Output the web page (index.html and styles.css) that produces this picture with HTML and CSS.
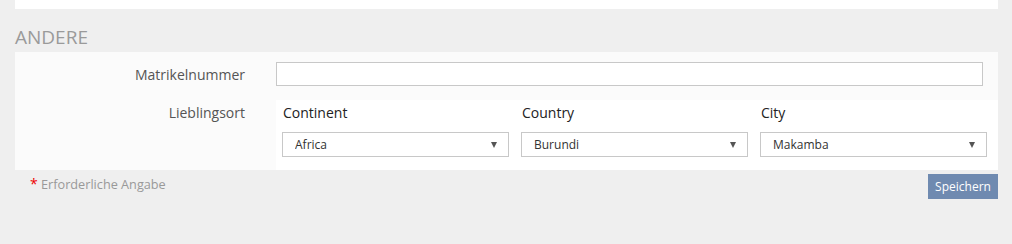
FILE: index.html
```html
<!DOCTYPE html>
<html>
  <head>
    <meta charset="utf-8">
    <title>Andere</title>
    <link rel="stylesheet" href="styles.css">
  </head>
  <body>
    <div class="panel top-panel"></div>

    <h2 class="section-title">ANDERE</h2>

    <form class="panel form-panel" onsubmit="return false">
      <div class="row">
        <label class="row-label" for="matrikel">Matrikelnummer</label>
        <input type="text" id="matrikel" class="text-input" />
      </div>
      <div class="row">
        <div class="row-label">Lieblingsort</div>
        <div class="place">
          <div class="place-field">
            <div class="place-label">Continent</div>
            <div class="select-wrap">
              <select>
                <option>Africa</option>
              </select>
            </div>
          </div>
          <div class="place-field">
            <div class="place-label">Country</div>
            <div class="select-wrap">
              <select>
                <option>Burundi</option>
              </select>
            </div>
          </div>
          <div class="place-field">
            <div class="place-label">City</div>
            <div class="select-wrap">
              <select>
                <option>Makamba</option>
              </select>
            </div>
          </div>
        </div>
      </div>
    </form>

    <div class="footer">
      <span class="required"><span class="star">*</span> Erforderliche Angabe</span>
      <button class="save">Speichern</button>
    </div>
  </body>
</html>
```

FILE: styles.css
```css
body {
  margin: 0;
  padding: 0 14px 0 15px;
  background: #efefef;
  font-family: "Open Sans", sans-serif;
  font-size: 14px;
  color: #333;
}
.panel {
  background: #fbfbfb;
}
.top-panel {
  height: 9px;
  background: #fff;
}
.section-title {
  margin: 0;
  padding: 15px 0 0;
  height: 28px;
  line-height: 26px;
  font-size: 19px;
  font-weight: normal;
  color: #9a9a9a;
}
.form-panel {
  padding: 10px 0 0;
}
.row {
  display: grid;
  grid-template-columns: 261px 1fr;
}
.row + .row {
  margin-top: 14px;
}
.row-label {
  text-align: right;
  padding-right: 31px;
  padding-top: 1px;
  line-height: 23px;
  color: #555;
}
.text-input {
  box-sizing: border-box;
  height: 24px;
  margin-right: 15px;
  border: 1px solid #c8c8c8;
  background: #fff;
  font-family: inherit;
}
.place {
  display: flex;
  gap: 12px;
  padding: 1px 11px 13px 6px;
  background: #fff;
}
.place-field {
  flex: 1;
}
.place-label {
  line-height: 24px;
  margin-bottom: 7px;
  padding-left: 1px;
  color: #222;
}
.select-wrap {
  position: relative;
}
.select-wrap::after {
  content: "";
  position: absolute;
  right: 12px;
  top: 10px;
  border-left: 3.5px solid transparent;
  border-right: 3.5px solid transparent;
  border-top: 6px solid #555;
  pointer-events: none;
}
.select-wrap select {
  appearance: none;
  -webkit-appearance: none;
  display: block;
  box-sizing: border-box;
  width: 100%;
  height: 25px;
  padding: 0 12px;
  border: 1px solid #c8c8c8;
  border-radius: 0;
  background: #fff;
  font-family: inherit;
  font-size: 12px;
  color: #333;
}
.footer {
  display: flex;
  justify-content: space-between;
  align-items: flex-start;
  padding: 4px 0 0 15px;
}
.required {
  font-size: 12.7px;
  color: #999;
}
.star {
  font-size: 14px;
  color: #e00;
}
.save {
  width: 70px;
  height: 25px;
  padding: 0;
  border: none;
  background: #6f8ab0;
  color: #fff;
  font-family: inherit;
  font-size: 12px;
}
```
